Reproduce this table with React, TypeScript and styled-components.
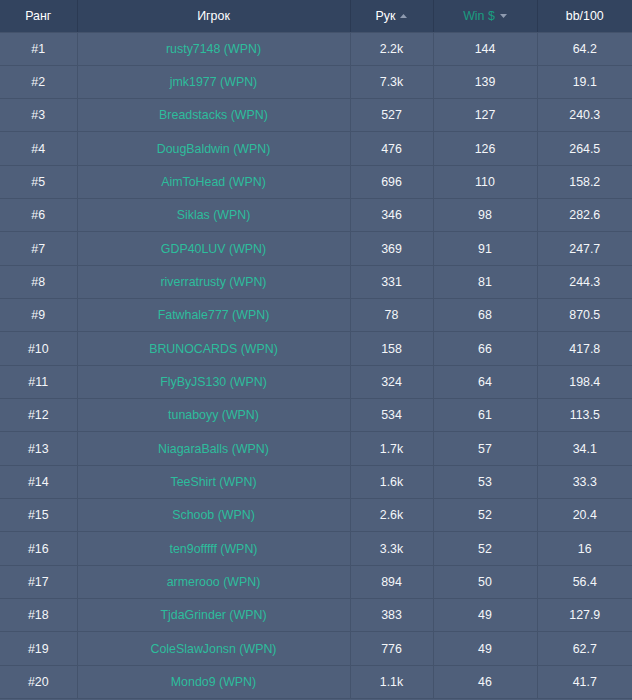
import React from "react";
import styled, { createGlobalStyle } from "styled-components";

const Global = createGlobalStyle`
  html, body { margin: 0; padding: 0; background: #4e5e79; }
  body { font-family: "Liberation Sans", Arial, sans-serif; }
`;

const Table = styled.table`
  width: 632px;
  table-layout: fixed;
  border-collapse: collapse;
  font-family: "Liberation Sans", Arial, sans-serif;
  font-size: 12.4px;
  color: #ffffff;
`;

const HeadRow = styled.tr`
  background: #33445f;
  height: 32px;
`;

const Th = styled.th<{ $active?: boolean }>`
  font-weight: normal;
  text-align: center;
  padding: 0;
  color: ${(p) => (p.$active ? "#1a9d80" : "#ffffff")};
  border-left: 1px solid #2b3a53;
  border-bottom: 1px solid #44536c;
  &:first-child { border-left: none; }
`;

const Row = styled.tr`
  background: #4f5f7a;
  height: 33.33px;
`;

const Td = styled.td<{ $name?: boolean }>`
  text-align: center;
  padding: 0;
  color: ${(p) => (p.$name ? "#2dbd9c" : "#f4f6f9")};
  border-left: 1px solid #44536c;
  border-bottom: 1px solid #44536c;
  &:first-child { border-left: none; }
`;

const Arrow = styled.svg`
  display: inline-block;
  margin-left: 5px;
  vertical-align: 2px;
`;

const Up = () => (
  <Arrow width="7" height="4" viewBox="0 0 7 4">
    <path d="M0 4 L3.5 0 L7 4 Z" fill="#8f9bb0" />
  </Arrow>
);
const Down = () => (
  <Arrow width="7" height="4" viewBox="0 0 7 4">
    <path d="M0 0 L3.5 4 L7 0 Z" fill="#8f9bb0" />
  </Arrow>
);

const rows: [string, string, string, string, string][] = [
  ["#1", "rusty7148 (WPN)", "2.2k", "144", "64.2"],
  ["#2", "jmk1977 (WPN)", "7.3k", "139", "19.1"],
  ["#3", "Breadstacks (WPN)", "527", "127", "240.3"],
  ["#4", "DougBaldwin (WPN)", "476", "126", "264.5"],
  ["#5", "AimToHead (WPN)", "696", "110", "158.2"],
  ["#6", "Siklas (WPN)", "346", "98", "282.6"],
  ["#7", "GDP40LUV (WPN)", "369", "91", "247.7"],
  ["#8", "riverratrusty (WPN)", "331", "81", "244.3"],
  ["#9", "Fatwhale777 (WPN)", "78", "68", "870.5"],
  ["#10", "BRUNOCARDS (WPN)", "158", "66", "417.8"],
  ["#11", "FlyByJS130 (WPN)", "324", "64", "198.4"],
  ["#12", "tunaboyy (WPN)", "534", "61", "113.5"],
  ["#13", "NiagaraBalls (WPN)", "1.7k", "57", "34.1"],
  ["#14", "TeeShirt (WPN)", "1.6k", "53", "33.3"],
  ["#15", "Schoob (WPN)", "2.6k", "52", "20.4"],
  ["#16", "ten9offfff (WPN)", "3.3k", "52", "16"],
  ["#17", "armerooo (WPN)", "894", "50", "56.4"],
  ["#18", "TjdaGrinder (WPN)", "383", "49", "127.9"],
  ["#19", "ColeSlawJonsn (WPN)", "776", "49", "62.7"],
  ["#20", "Mondo9 (WPN)", "1.1k", "46", "41.7"],
];

export default function App() {
  return (
    <>
      <Global />
      <Table>
        <colgroup>
          <col style={{ width: 77 }} />
          <col style={{ width: 273 }} />
          <col style={{ width: 83 }} />
          <col style={{ width: 104 }} />
          <col style={{ width: 95 }} />
        </colgroup>
        <thead>
          <HeadRow>
            <Th>Ранг</Th>
            <Th>Игрок</Th>
            <Th>
              Рук
              <Up />
            </Th>
            <Th $active>
              Win $
              <Down />
            </Th>
            <Th>bb/100</Th>
          </HeadRow>
        </thead>
        <tbody>
          {rows.map((r) => (
            <Row key={r[0]}>
              <Td>{r[0]}</Td>
              <Td $name>{r[1]}</Td>
              <Td>{r[2]}</Td>
              <Td>{r[3]}</Td>
              <Td>{r[4]}</Td>
            </Row>
          ))}
        </tbody>
      </Table>
    </>
  );
}
